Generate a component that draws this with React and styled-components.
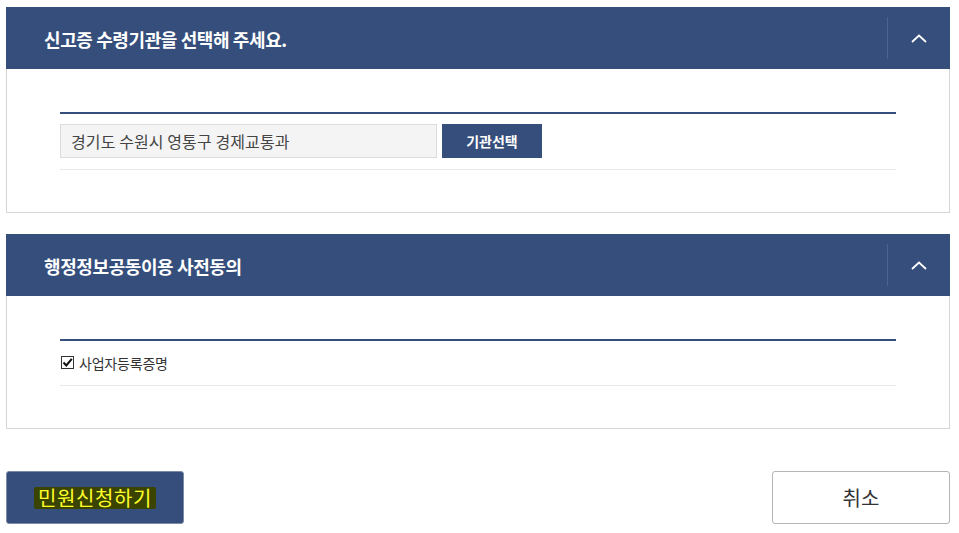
import React from 'react'
import styled, { createGlobalStyle } from 'styled-components'

const colors = {
  NAVY: '#354e7b',
  BORDER: '#d6d6d6',
  ROW_LINE: '#e8e8e8',
}

const GlobalStyle = createGlobalStyle`
  html, body {
    margin: 0;
    padding: 0;
    background: #ffffff;
    font-family: "Noto Sans CJK KR", "Noto Sans", sans-serif;
  }
`

const Panel = ({ title, children }) => (
  <PanelBox>
    <PanelHeader>
      <PanelTitle>{title}</PanelTitle>
      <ToggleButton>
        <svg width="16" height="9" viewBox="0 0 16 9" fill="none">
          <path d="M1 8 L8 1.5 L15 8" stroke="#ffffff" strokeWidth="1.8" />
        </svg>
      </ToggleButton>
    </PanelHeader>
    <PanelBody>
      <Table>{children}</Table>
    </PanelBody>
  </PanelBox>
)

const App = () => {
  return (
    <>
      <GlobalStyle />
      <Page>
        <Panel title="신고증 수령기관을 선택해 주세요.">
          <Row>
            <OrgInput readOnly value="경기도 수원시 영통구 경제교통과" />
            <SelectButton>기관선택</SelectButton>
          </Row>
        </Panel>

        <Panel title="행정정보공동이용 사전동의">
          <Row>
            <CheckLabel>
              <CheckBox>
                <svg width="11" height="11" viewBox="0 0 11 11" fill="none">
                  <path d="M1.5 5.5 L4.3 8.5 L9.8 1.8" stroke="#111" strokeWidth="2" />
                </svg>
              </CheckBox>
              사업자등록증명
            </CheckLabel>
          </Row>
        </Panel>

        <Actions>
          <SubmitButton>
            <Highlight>민원신청하기</Highlight>
          </SubmitButton>
          <CancelButton>취소</CancelButton>
        </Actions>
      </Page>
    </>
  )
}

const Page = styled.div`
  width: 944px;
  padding: 7px 0 0 6px;
  display: flex;
  flex-direction: column;
  gap: 21px;
`

const PanelBox = styled.section`
  border: 1px solid ${ colors.BORDER };
  border-top: none;
`

const PanelHeader = styled.div`
  height: 62px;
  margin: 0 -1px;
  background-color: ${ colors.NAVY };
  display: flex;
  align-items: center;
  justify-content: space-between;
`

const PanelTitle = styled.h2`
  margin: 0 0 0 38px;
  color: #ffffff;
  font-size: 18px;
  font-weight: 700;
  letter-spacing: -0.4px;
  padding-top: 1px;
`

const ToggleButton = styled.div`
  width: 62px;
  height: 42px;
  border-left: 1px solid #4b6390;
  display: flex;
  align-items: center;
  justify-content: center;
`

const PanelBody = styled.div`
  padding: 43px 53px 42px;
`

const Table = styled.div`
  border-top: 2px solid ${ colors.NAVY };
`

const Row = styled.div`
  padding: 10px 0 11px;
  border-bottom: 1px solid ${ colors.ROW_LINE };
  display: flex;
  align-items: center;
  gap: 5px;
`

const OrgInput = styled.input`
  box-sizing: border-box;
  width: 377px;
  height: 34px;
  padding: 0 10px;
  border: 1px solid #dcdcdc;
  background: #f4f4f4;
  color: #444;
  font-family: inherit;
  font-size: 16px;
  letter-spacing: 0.1px;
  outline: none;
`

const SelectButton = styled.div`
  width: 100px;
  height: 34px;
  background-color: ${ colors.NAVY };
  color: #ffffff;
  font-size: 14px;
  font-weight: 700;
  display: flex;
  align-items: center;
  justify-content: center;
`

const CheckLabel = styled.label`
  display: flex;
  align-items: center;
  gap: 5px;
  font-size: 14px;
  letter-spacing: -0.2px;
  color: #333;
  height: 23px;
`

const CheckBox = styled.span`
  box-sizing: border-box;
  width: 13px;
  height: 13px;
  border: 1px solid #333;
  display: flex;
  align-items: center;
  justify-content: center;
  margin-left: 1px;
`

const Actions = styled.div`
  margin-top: 21px;
  display: flex;
  justify-content: space-between;
`

const BaseButton = styled.div`
  box-sizing: border-box;
  width: 178px;
  height: 53px;
  border-radius: 3px;
  display: flex;
  align-items: center;
  justify-content: center;
  font-size: 20px;
`

const SubmitButton = styled(BaseButton)`
  background-color: ${ colors.NAVY };
  border: 1px solid #7d8aa3;
`

const Highlight = styled.span`
  background: #3a4400;
  color: #ffff2a;
  padding: 0 4px;
  border-radius: 2px;
  line-height: 22px;
  letter-spacing: 0.6px;
`

const CancelButton = styled(BaseButton)`
  background: #ffffff;
  border: 1px solid #b5b5b5;
  color: #333;
`

export default App
